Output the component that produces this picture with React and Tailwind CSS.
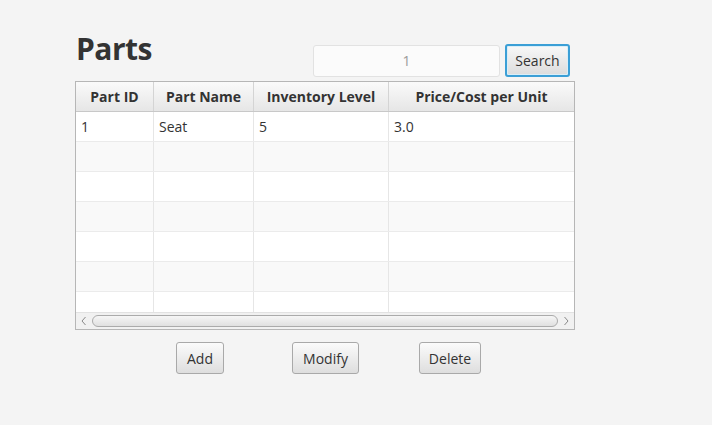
import React from "react";

const columns = [
  { title: "Part ID", width: "w-[78px]" },
  { title: "Part Name", width: "w-[100px]" },
  { title: "Inventory Level", width: "w-[135px]" },
  { title: "Price/Cost per Unit", width: "flex-1" },
];

const rows = [
  ["1", "Seat", "5", "3.0"],
  ["", "", "", ""],
  ["", "", "", ""],
  ["", "", "", ""],
  ["", "", "", ""],
  ["", "", "", ""],
  ["", "", "", ""],
];

const FxButton = ({ children, className = "" }) => (
  <button
    className={`h-[32px] rounded-[3px] border border-[#a9a9a9] bg-gradient-to-b from-[#fbfbfb] to-[#dedede] text-[14px] text-[#333] ${className}`}
  >
    {children}
  </button>
);

const App = () => {
  return (
    <div
      className="w-[712px] h-[425px] bg-[#f4f4f4] pl-[75px] pt-[33px]"
      style={{ fontFamily: '"Open Sans", "Noto Sans", sans-serif' }}
    >
      <div className="flex w-[500px] h-[48px] items-start">
        <h1 className="text-[30px] font-bold leading-[32px] tracking-[-0.5px] text-[#333] pl-[1px]">
          Parts
        </h1>
        <div className="ml-auto mr-[5px] mt-[11px] flex items-center gap-[5px]">
          <div className="w-[187px] h-[32px] rounded-[3px] border border-[#e2e2e2] bg-[#fbfbfb] flex items-center justify-center text-[14px] text-[#9a9a9a]">
            1
          </div>
          <button className="w-[65px] h-[33px] rounded-[3px] border-[2px] border-[#3b9fd6] bg-gradient-to-b from-[#f8f8f8] to-[#dcdcdc] text-[14px] text-[#333] shadow-[inset_0_0_0_1px_#d9eef8]">
            Search
          </button>
        </div>
      </div>

      <div className="w-[500px] h-[249px] border border-[#b6b6b6] bg-white flex flex-col overflow-hidden">
        <div className="flex h-[30px] shrink-0 border-b border-[#c8c8c8] bg-gradient-to-b from-[#fafafa] to-[#e6e6e6]">
          {columns.map((c) => (
            <div
              key={c.title}
              className={`${c.width} flex items-center justify-center border-r border-[#d4d4d4] text-[14px] font-bold text-[#333] last:border-r-0`}
            >
              {c.title}
            </div>
          ))}
        </div>
        <div className="flex-1 overflow-hidden">
          {rows.map((r, i) => (
            <div
              key={i}
              className={`flex h-[30px] border-b border-[#ebebeb] ${
                i % 2 === 1 ? "bg-[#f9f9f9]" : "bg-white"
              }`}
            >
              {r.map((cell, j) => (
                <div
                  key={j}
                  className={`${columns[j].width} flex items-center pl-[5px] border-r border-[#e6e6e6] text-[14px] text-[#333] last:border-r-0`}
                >
                  {cell}
                </div>
              ))}
            </div>
          ))}
        </div>
        <div className="h-[17px] shrink-0 bg-[#f1f1f1] border-t border-[#e2e2e2] flex items-center px-[3px]">
          <svg width="10" height="12" viewBox="0 0 10 12" className="shrink-0">
            <path d="M6.5 2 L3 6 L6.5 10" fill="none" stroke="#8a8a8a" strokeWidth="1" />
          </svg>
          <div className="flex-1 mx-[3px] h-[12px] rounded-full border border-[#ababab] bg-gradient-to-b from-[#f6f6f6] to-[#e0e0e0]" />
          <svg width="10" height="12" viewBox="0 0 10 12" className="shrink-0">
            <path d="M3.5 2 L7 6 L3.5 10" fill="none" stroke="#8a8a8a" strokeWidth="1" />
          </svg>
        </div>
      </div>

      <div className="flex mt-[12px]">
        <FxButton className="ml-[101px] w-[48px]">Add</FxButton>
        <FxButton className="ml-[68px] w-[67px]">Modify</FxButton>
        <FxButton className="ml-[60px] w-[62px]">Delete</FxButton>
      </div>
    </div>
  );
};

export default App;
